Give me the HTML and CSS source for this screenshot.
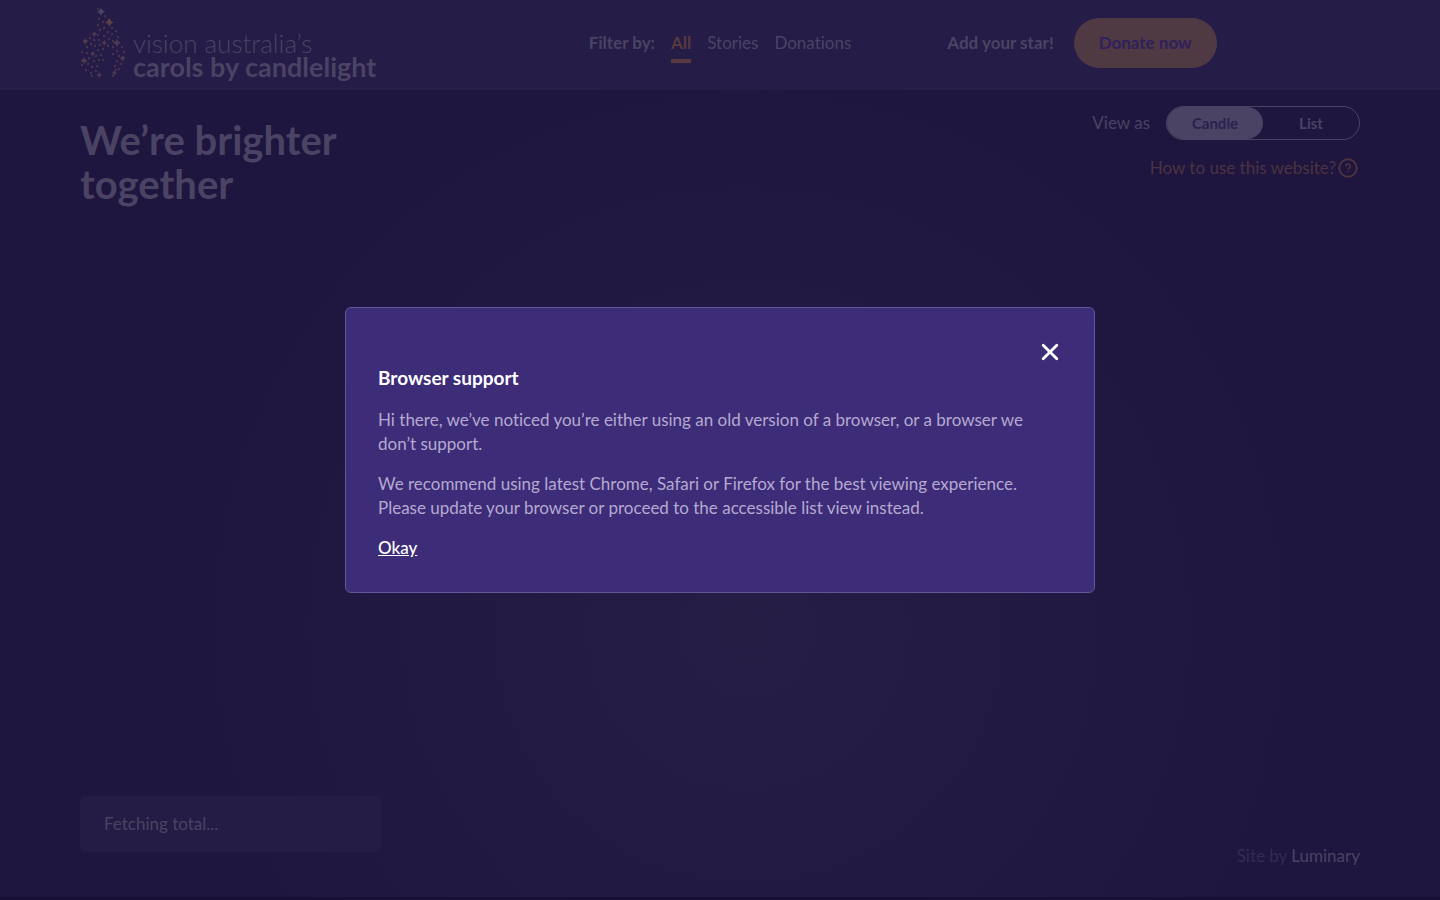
FILE: index.html
```html
<!DOCTYPE html>
<html lang="en">
<head>
<meta charset="utf-8">
<meta name="viewport" content="width=device-width, initial-scale=1">
<title>Carols by Candlelight</title>
<link rel="stylesheet" href="styles.css">
</head>
<body>
<div class="page">
  <header class="header">
    <a class="logo" href="#">
      <svg class="logo-flame" width="48" height="72" viewBox="80 8 48 72" aria-hidden="true">
        <defs><path id="star" d="M0-4Q.9-.9 4 0Q.9.9 0 4Q-.9.9-4 0Q-.9-.9 0-4Z"/></defs>
        <g fill="#4c3850">
          <use href="#star" transform="translate(109.3 23.3) scale(1.15)" fill="#5a3f46"/>
          <use href="#star" transform="translate(94.3 35) scale(.75)"/>
          <use href="#star" transform="translate(85.3 42.3) scale(.8)" fill="#533b48"/>
          <use href="#star" transform="translate(117 43.7)"/>
          <use href="#star" transform="translate(104.3 43.7) scale(.75)"/>
          <use href="#star" transform="translate(84 61.7) scale(.85)" fill="#533b48"/>
          <use href="#star" transform="translate(122.7 59.3) scale(.8)"/>
          <use href="#star" transform="translate(92.7 54.7) scale(.7)"/>
          <use href="#star" transform="translate(99.3 76) scale(.75)"/>
          <use href="#star" transform="translate(114.3 74) scale(.75)"/>
          <use href="#star" transform="translate(101 12.7)" fill="#4b4363"/>
        </g>
        <path d="M98 10h0M105 17h0M99 20h0M103 23h0M98 26h0M104 29h0M100 31h0M112 29h0M116 32h0M108 33h0M112 35h0M98 36h0M104 37h0M118 38h0M90 39h0M94 41h0M99 41h0M109 40h0M113 42h0M87 48h0M91 45h0M95 47h0M100 46h0M108 47h0M113 48h0M122 48h0M82 53h0M87 54h0M98 51h0M103 50h0M117 52h0M124 53h0M96 57h0M101 56h0M113 55h0M119 57h0M89 59h0M94 62h0M99 61h0M103 61h0M117 62h0M82 66h0M88 65h0M92 68h0M97 67h0M115 67h0M121 65h0M86 71h0M91 74h0M96 72h0M116 71h0M119 70h0M92 77h0M113 77h0" stroke="#46334d" stroke-width="2.4" stroke-linecap="round"/>
      </svg>
      <span class="logo-text"><span class="logo-top">vision australia’s</span><span class="logo-main">carols by candlelight</span></span>
    </a>
    <nav class="filters" aria-label="Filter">
      <strong>Filter by:</strong>
      <a class="filter filter-active" href="#">All</a>
      <a class="filter" href="#">Stories</a>
      <a class="filter" href="#">Donations</a>
    </nav>
    <div class="donate">
      <strong>Add your star!</strong>
      <button class="donate-button" type="button">Donate now</button>
    </div>
  </header>
  <main class="main">
    <div class="intro">
      <h1 class="title">We’re brighter<br>together</h1>
      <div class="tools">
        <div class="view">
          <span>View as</span>
          <div class="toggle">
            <button class="option option-active" type="button" aria-pressed="true">Candle</button>
            <button class="option" type="button" aria-pressed="false">List</button>
          </div>
        </div>
        <a class="help" href="#">How to use this website?
          <svg width="24" height="24" viewBox="0 0 24 24" fill="none" stroke="currentColor" stroke-width="2" aria-hidden="true"><circle cx="12" cy="12" r="8.7"/><path d="M9.8 10.2a2.2 2.2 0 1 1 3.2 1.9c-.8.4-1 .7-1 1.4" stroke-width="1.6"/><circle cx="12" cy="15.6" r=".6" stroke-width="1"/></svg>
        </a>
      </div>
    </div>
    <footer class="footer">
      <p class="total">Fetching total...</p>
      <p class="credit">Site by <a class="credit-link" href="#">Luminary</a></p>
    </footer>
  </main>
</div>
<div class="overlay">
  <section class="modal" role="dialog" aria-modal="true" aria-labelledby="modal-title">
    <button class="close" type="button" aria-label="Close">
      <svg width="24" height="24" viewBox="0 0 24 24" stroke="currentColor" stroke-width="2.8" stroke-linecap="round" aria-hidden="true"><path d="M5.2 5.2l13.6 13.6M18.8 5.2L5.2 18.8"/></svg>
    </button>
    <h2 class="modal-title" id="modal-title">Browser support</h2>
    <p class="modal-text">Hi there, we’ve noticed you’re either using an old version of a browser, or a browser we don’t support.</p>
    <p class="modal-text">We recommend using latest Chrome, Safari or Firefox for the best viewing experience. Please update your browser or proceed to the accessible list view instead.</p>
    <button class="okay" type="button">Okay</button>
  </section>
</div>
</body>
</html>
```
FILE: styles.css
```css
* { box-sizing: border-box; }
body {
  margin: 0;
  background: #1e163f;
  color: #4b4363;
  font: 17px/24px Lato, "Open Sans", sans-serif;
  font-variant-ligatures: none;
}
button { font: inherit; color: inherit; border: 0; padding: 0; background: none; cursor: pointer; }
a { color: inherit; text-decoration: none; }
h1, h2, p { margin: 0; }
.page {
  min-height: 100vh;
  display: flex;
  flex-direction: column;
  border-bottom: 3px solid #180f34;
  background: radial-gradient(circle at 52% 70%, #261d45, #1e163f 580px);
}
.header {
  display: grid;
  grid-template-columns: 1fr auto 1fr;
  align-items: center;
  min-height: 90px;
  padding: 0 80px 4px;
  background: #251c47;
}
.logo { display: flex; gap: 5px; align-items: flex-end; }
.logo-text { display: flex; flex-direction: column; white-space: nowrap; }
.logo-top { font-size: 26px; line-height: 24px; font-weight: 300; }
.logo-main { font-size: 27px; line-height: 24px; font-weight: 700; }
.filters { display: flex; gap: 16px; }
.filter { border-bottom: 4px solid transparent; padding: 8px 0 4px; }
.filters strong { padding-top: 8px; }
.filter-active { color: #58393f; border-color: #58393f; font-weight: 700; }
.donate { display: flex; align-items: center; gap: 20px; padding-left: 96px; white-space: nowrap; }
.donate-button {
  padding: 13px 25px;
  border-radius: 25px;
  background: #4f3943;
  color: #30205c;
  font-weight: 700;
}
.main { flex: 1; display: flex; flex-direction: column; justify-content: space-between; padding: 16px 80px 29px; }
.intro { display: flex; justify-content: space-between; }
.title { padding-top: 12px; font-size: 40px; line-height: 44px; font-weight: 700; }
.tools { display: flex; flex-direction: column; align-items: flex-end; gap: 16px; }
.view { display: flex; align-items: center; gap: 16px; }
.toggle { display: flex; width: 194px; height: 34px; border: 1px solid #4b4363; border-radius: 17px; }
.option { flex: 1; font-size: 15px; font-weight: 700; border-radius: 16px; }
.option-active { background: #4b4363; color: #2a2050; }
.help { display: flex; color: #4d333f; }
.footer { display: flex; justify-content: space-between; align-items: flex-start; }
.total { width: 302px; padding: 16px 24px; border-radius: 6px; background: #251c45; }
.credit { padding-top: 48px; color: #352b50; }
.credit-link { color: #4b4363; }
.overlay { position: fixed; inset: 0; display: grid; place-items: center; padding: 16px; }
.modal {
  display: flex;
  flex-direction: column;
  align-items: flex-start;
  gap: 16px;
  width: 100%;
  max-width: 750px;
  padding: 32px;
  border: 1px solid #65559a;
  border-radius: 6px;
  background: #3d2c77;
  color: #b5a9d2;
}
.close { align-self: flex-end; width: 24px; height: 24px; margin-bottom: -16px; color: #fff; }
.close svg { display: block; }
.modal-title { font-size: 19px; line-height: 28px; font-weight: 700; color: #fff; }
.okay { color: #fff; font-weight: 500; text-decoration: underline; }
```
